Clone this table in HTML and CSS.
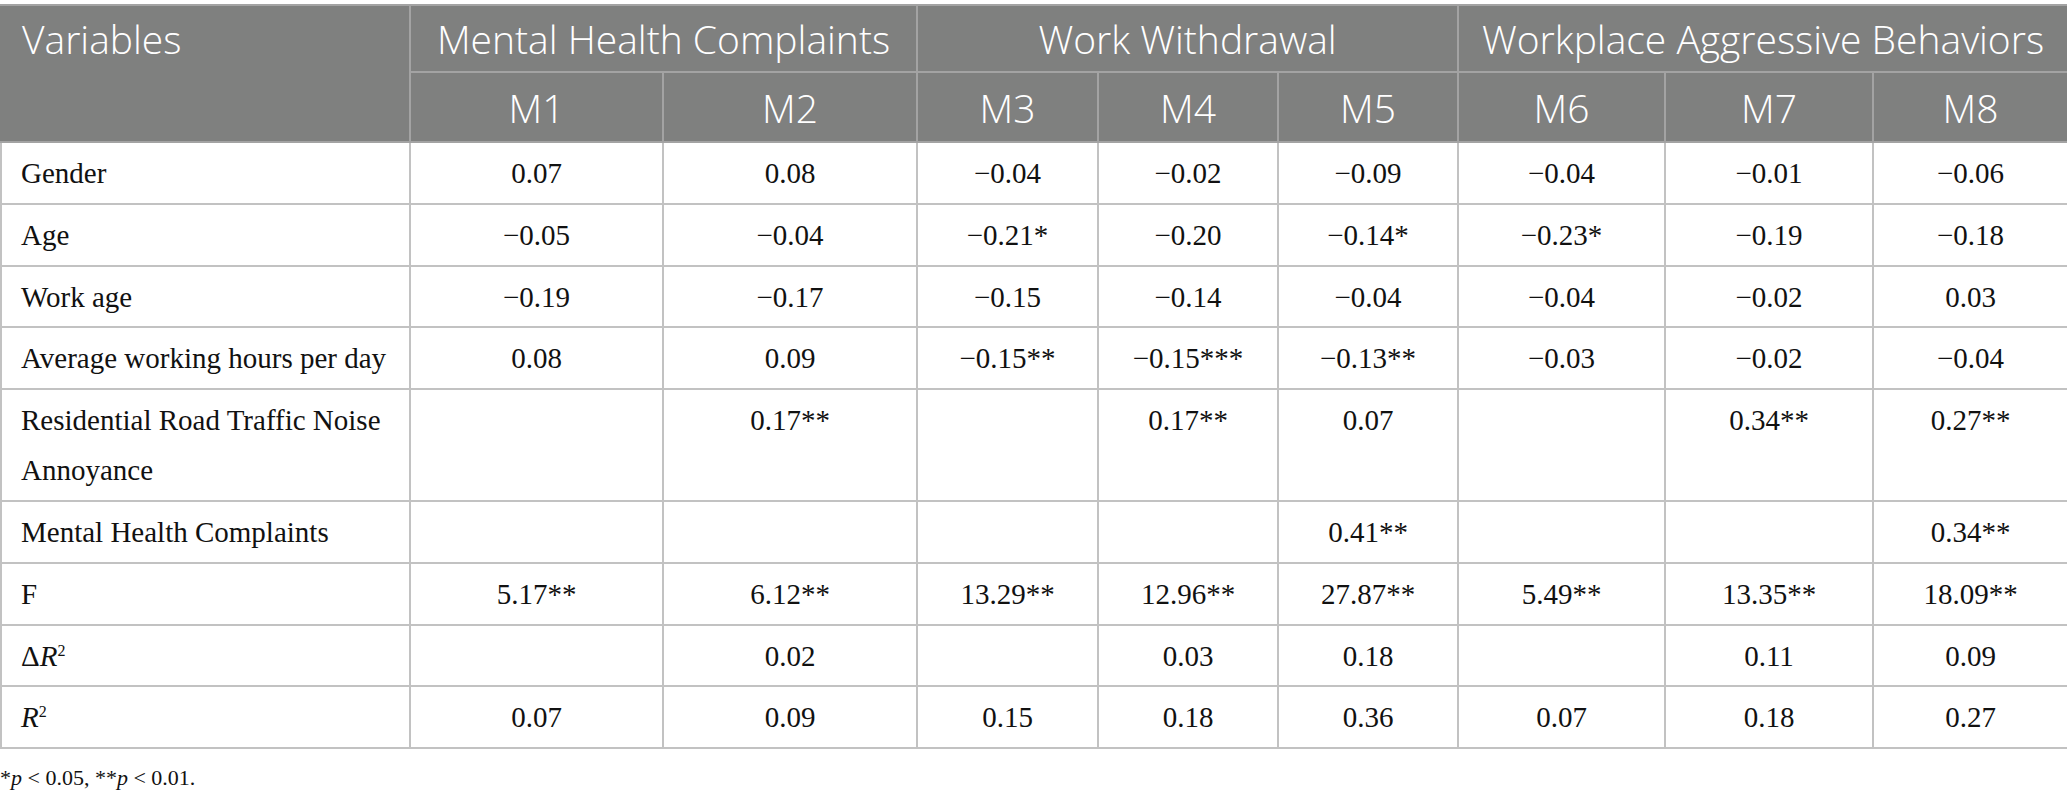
FILE: index.html
```html
<!DOCTYPE html>
<html>
<head>
<meta charset="utf-8">
<link rel="stylesheet" href="styles.css">
</head>
<body>
<table class="tbl">
  <colgroup>
    <col class="c-var"><col class="c-m1"><col class="c-m2"><col class="c-m3"><col class="c-m4"><col class="c-m5"><col class="c-m6"><col class="c-m7"><col class="c-m8">
  </colgroup>
  <thead>
    <tr class="h1">
      <th rowspan="2" class="hvar">Variables</th>
      <th colspan="2">Mental Health Complaints</th>
      <th colspan="3">Work Withdrawal</th>
      <th colspan="3">Workplace Aggressive Behaviors</th>
    </tr>
    <tr class="h2">
      <th>M1</th><th>M2</th><th>M3</th><th>M4</th><th>M5</th><th>M6</th><th>M7</th><th>M8</th>
    </tr>
  </thead>
  <tbody>
    <tr><td class="var">Gender</td><td>0.07</td><td>0.08</td><td>−0.04</td><td>−0.02</td><td>−0.09</td><td>−0.04</td><td>−0.01</td><td>−0.06</td></tr>
    <tr><td class="var">Age</td><td>−0.05</td><td>−0.04</td><td>−0.21*</td><td>−0.20</td><td>−0.14*</td><td>−0.23*</td><td>−0.19</td><td>−0.18</td></tr>
    <tr><td class="var">Work age</td><td>−0.19</td><td>−0.17</td><td>−0.15</td><td>−0.14</td><td>−0.04</td><td>−0.04</td><td>−0.02</td><td>0.03</td></tr>
    <tr><td class="var">Average working hours per day</td><td>0.08</td><td>0.09</td><td>−0.15**</td><td>−0.15***</td><td>−0.13**</td><td>−0.03</td><td>−0.02</td><td>−0.04</td></tr>
    <tr><td class="var">Residential Road Traffic Noise Annoyance</td><td></td><td>0.17**</td><td></td><td>0.17**</td><td>0.07</td><td></td><td>0.34**</td><td>0.27**</td></tr>
    <tr><td class="var">Mental Health Complaints</td><td></td><td></td><td></td><td></td><td>0.41**</td><td></td><td></td><td>0.34**</td></tr>
    <tr><td class="var">F</td><td>5.17**</td><td>6.12**</td><td>13.29**</td><td>12.96**</td><td>27.87**</td><td>5.49**</td><td>13.35**</td><td>18.09**</td></tr>
    <tr><td class="var">Δ<i>R</i><sup>2</sup></td><td></td><td>0.02</td><td></td><td>0.03</td><td>0.18</td><td></td><td>0.11</td><td>0.09</td></tr>
    <tr><td class="var"><i>R</i><sup>2</sup></td><td>0.07</td><td>0.09</td><td>0.15</td><td>0.18</td><td>0.36</td><td>0.07</td><td>0.18</td><td>0.27</td></tr>
  </tbody>
</table>
<p class="note">*<i>p</i> &lt; 0.05, **<i>p</i> &lt; 0.01.</p>
</body>
</html>
```

FILE: styles.css
```css
html, body {
  margin: 0;
  padding: 0;
  background: #ffffff;
}
body {
  padding-top: 4px;
  font-family: "Liberation Serif", "Times New Roman", serif;
  color: #111111;
}
.tbl {
  width: 2067px;
  table-layout: fixed;
  border-collapse: collapse;
  border: 2px solid #c2c2c2;
}
.c-var { width: 409px; }
.c-m1 { width: 253px; }
.c-m2 { width: 254px; }
.c-m3 { width: 181px; }
.c-m4 { width: 180px; }
.c-m5 { width: 180px; }
.c-m6 { width: 207px; }
.c-m7 { width: 208px; }
.c-m8 { width: 195px; }

thead th {
  background: #7f807f;
  color: #ffffff;
  font-family: "Open Sans", "Noto Sans", sans-serif;
  font-weight: 300;
  font-size: 39px;
  line-height: 48px;
  text-align: center;
  border: 2px solid #a3a3a3;
  padding: 9px 0 8px 0;
}
thead .hvar {
  text-align: left;
  vertical-align: top;
  padding-left: 20px;
}
.h1 th { height: 48px; }
.h2 th { height: 49px; padding-top: 10px; padding-bottom: 9px; }
.tbl > thead th:first-child { border-left-color: #7f807f; }

tbody td {
  border: 2px solid #c2c2c2;
  font-size: 29px;
  line-height: 50px;
  text-align: center;
  vertical-align: top;
  padding: 5px 0 4.8px 0;
}
tbody td.var {
  text-align: left;
  padding-left: 19px;
  padding-right: 19px;
}
sup {
  font-size: 16px;
  line-height: 0;
  vertical-align: 10px;
}
.note {
  margin: 14px 0 0 0;
  font-size: 22px;
  line-height: 30px;
  color: #111111;
}
```
